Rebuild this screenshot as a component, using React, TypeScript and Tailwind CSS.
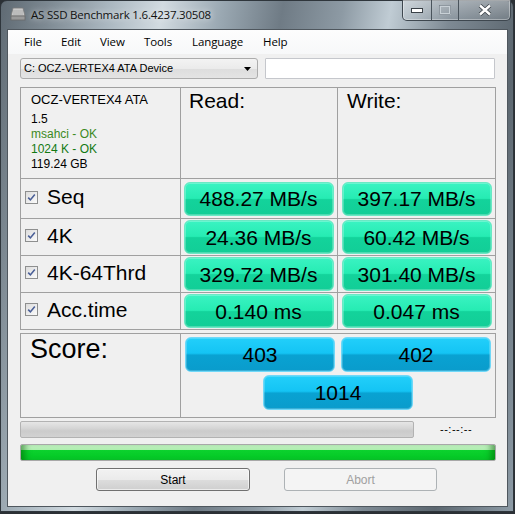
import React from 'react';

const cellBg = 'bg-[#f0f0f0]';

function Check() {
  return (
    <div className="w-[13px] h-[13px] border border-[#8e8f8f] bg-[linear-gradient(135deg,#dcdcdc,#fbfbfb)] flex items-center justify-center shrink-0">
      <svg width="9" height="9" viewBox="0 0 9 9">
        <path d="M1.2 4.6 L3.4 6.9 L7.8 1.6" fill="none" stroke="#4a5f97" strokeWidth="1.6" />
      </svg>
    </div>
  );
}

function GreenBtn({ children }: { children: React.ReactNode }) {
  return (
    <div className="w-[150px] h-[34px] rounded-[6px] border border-[#6ae8c4] bg-[linear-gradient(to_bottom,#3af3c2_0%,#26ecb3_48%,#13d39b_52%,#12ce97_100%)] shadow-[inset_0_0_0_1px_rgba(255,255,255,0.25)] flex items-center justify-center text-[21px] text-black pt-[1px]">
      {children}
    </div>
  );
}

function BlueBtn({ children }: { children: React.ReactNode }) {
  return (
    <div className="w-[150px] h-[35px] rounded-[6px] border border-[#6fd8f8] bg-[linear-gradient(to_bottom,#22cffa_0%,#14c4f4_46%,#09a2d2_52%,#0a9ccc_100%)] shadow-[inset_0_0_0_1px_rgba(255,255,255,0.2)] flex items-center justify-center text-[21px] text-black">
      {children}
    </div>
  );
}

function RowLabel({ label }: { label: string }) {
  return (
    <div className={`${cellBg} flex items-center pl-[4px] pb-[3px] gap-[9px]`}>
      <Check />
      <span className="text-[21px] leading-[24px] text-black">{label}</span>
    </div>
  );
}

const rows = [
  { label: 'Seq', read: '488.27 MB/s', write: '397.17 MB/s' },
  { label: '4K', read: '24.36 MB/s', write: '60.42 MB/s' },
  { label: '4K-64Thrd', read: '329.72 MB/s', write: '301.40 MB/s' },
  { label: 'Acc.time', read: '0.140 ms', write: '0.047 ms' },
];

// menu items with their slot widths (text + spacing)
const menu = [
  { name: 'File', w: 'w-[37px]' },
  { name: 'Edit', w: 'w-[39px]' },
  { name: 'View', w: 'w-[44px]' },
  { name: 'Tools', w: 'w-[48px]' },
  { name: 'Language', w: 'w-[71px]' },
  { name: 'Help', w: 'w-[40px]' },
];

export default function App() {
  return (
    <div className="w-[515px] h-[514px] bg-[#2b3035] overflow-hidden font-['Liberation_Sans',Arial,sans-serif]">
      <div className="w-[514px] h-[512px] rounded-t-[7px] border border-[#2f363c] bg-[linear-gradient(100deg,#5f6a73_0%,#7d8992_8%,#a9b6bf_18%,#d2dbe1_27%,#9aa8b2_37%,#6f7b85_47%,#8d9aa4_57%,#c0ccd4_65%,#7e8a94_75%,#5c6770_87%,#8d9ba6_100%)] flex flex-col">
        {/* title bar */}
        <div className="h-[28px] flex items-start">
          <svg className="ml-[9px] mt-[6px]" width="16" height="14" viewBox="0 0 16 14">
            <path d="M3 1 H13 L15 9 H1 Z" fill="#c9c9c9" stroke="#7a7a7a" strokeWidth="0.8" />
            <rect x="1" y="9" width="14" height="4" fill="#9a9a9a" stroke="#6a6a6a" strokeWidth="0.8" />
            <path d="M4 3 V8 M6 3 V8 M8 3 V8 M10 3 V8 M12 3 V8" stroke="#a8a8a8" strokeWidth="0.8" />
          </svg>
          <span className="ml-[5px] mt-[6px] text-[11.5px] leading-[16px] tracking-[-0.2px] text-[#111] font-['Open_Sans',sans-serif] [text-shadow:0_0_6px_rgba(255,255,255,0.9)]">
            AS SSD Benchmark 1.6.4237.30508
          </span>
          <div className="ml-auto mr-[2px] -mt-[1px] h-[21px] flex rounded-b-[5px] border border-[#3e474f] border-t-0 overflow-hidden shadow-[inset_0_0_0_1px_rgba(255,255,255,0.35)]">
            <div className="w-[29px] h-full flex items-center justify-center border-r border-[#4a545c] bg-[linear-gradient(to_bottom,rgba(255,255,255,0.35),rgba(255,255,255,0.1))]">
              <svg width="12" height="6" viewBox="0 0 12 6">
                <rect x="0.5" y="1.5" width="11" height="4" fill="#fff" stroke="#3a4147" />
              </svg>
            </div>
            <div className="w-[27px] h-full flex items-center justify-center border-r border-[#4a545c] bg-[linear-gradient(to_bottom,rgba(255,255,255,0.35),rgba(255,255,255,0.1))]">
              <svg width="12" height="10" viewBox="0 0 12 10">
                <rect x="1" y="1" width="10" height="8" fill="none" stroke="#c8d0d6" strokeWidth="2" />
                <rect x="0.5" y="0.5" width="11" height="9" fill="none" stroke="#6a747c" strokeWidth="0.6" />
              </svg>
            </div>
            <div className="w-[51px] h-full flex items-center justify-center bg-[linear-gradient(to_bottom,rgba(255,255,255,0.35),rgba(255,255,255,0.1))]">
              <svg width="14" height="12" viewBox="0 0 14 12">
                <path d="M2 1.5 L12 10.5 M12 1.5 L2 10.5" stroke="#3a4147" strokeWidth="4" />
                <path d="M2 1.5 L12 10.5 M12 1.5 L2 10.5" stroke="#fff" strokeWidth="2.4" />
              </svg>
            </div>
          </div>
        </div>

        {/* client area */}
        <div className="ml-[6px] w-[501px] h-[478px] border border-[#4f575e] bg-[#f0f0f0] flex flex-col">
          {/* menu */}
          <div className="h-[24px] bg-[linear-gradient(to_bottom,#fdfdfd,#f7f8f9)] flex items-center pl-[16px] text-[11.5px] tracking-[-0.1px] text-black font-['Open_Sans',sans-serif]">
            {menu.map((m) => (
              <span key={m.name} className={m.w}>{m.name}</span>
            ))}
          </div>

          <div className="px-[12px] flex flex-col">
            {/* drive selector */}
            <div className="mt-[4px] flex gap-[7px]">
              <div className="w-[239px] h-[21px] rounded-[3px] border border-[#acacac] bg-[linear-gradient(to_bottom,#f3f3f3_0%,#ebebeb_50%,#dddddd_51%,#e4e4e4_100%)] flex items-center pl-[3px] pr-[6px]">
                <span className="text-[11px] text-black flex-1">C: OCZ-VERTEX4 ATA Device</span>
                <svg width="7" height="4" viewBox="0 0 7 4">
                  <path d="M0 0 H7 L3.5 4 Z" fill="#000" />
                </svg>
              </div>
              <div className="w-[231px] h-[21px] border border-[#c5c7cc] bg-white rounded-[1px]" />
            </div>

            {/* results table */}
            <div className="mt-[8px] grid grid-cols-[159px_156px_157px] grid-rows-[90px_39px_36px_36px_36px] gap-px p-px bg-[#a0a0a0] w-[476px]">
              <div className={`${cellBg} pl-[10px] pt-[4px] flex flex-col`}>
                <span className="text-[13px] leading-[15px] text-black">OCZ-VERTEX4 ATA</span>
                <span className="mt-[5px] text-[12px] leading-[15px] text-black">1.5</span>
                <span className="text-[12px] leading-[15px] text-[#3c8a1e]">msahci - OK</span>
                <span className="text-[12px] leading-[15px] text-[#137a13]">1024 K - OK</span>
                <span className="text-[12px] leading-[15px] text-black">119.24 GB</span>
              </div>
              <div className={`${cellBg} pl-[8px] pt-[1px] text-[21px] leading-[24px] text-black`}>Read:</div>
              <div className={`${cellBg} pl-[9px] pt-[1px] text-[21px] leading-[24px] text-black`}>Write:</div>
              {rows.map((r) => (
                <React.Fragment key={r.label}>
                  <RowLabel label={r.label} />
                  <div className={`${cellBg} flex items-center justify-center pr-[1px]`}>
                    <GreenBtn>{r.read}</GreenBtn>
                  </div>
                  <div className={`${cellBg} flex items-center justify-center`}>
                    <GreenBtn>{r.write}</GreenBtn>
                  </div>
                </React.Fragment>
              ))}
            </div>

            {/* score table */}
            <div className="mt-[3px] grid grid-cols-[159px_314px] grid-rows-[83px] gap-px p-px bg-[#a0a0a0] w-[476px]">
              <div className={`${cellBg} pl-[9px] text-[27px] leading-[31px] text-black`}>Score:</div>
              <div className={`${cellBg} flex flex-col items-center pt-[3px] gap-[3px]`}>
                <div className="flex gap-[6px]">
                  <BlueBtn>403</BlueBtn>
                  <BlueBtn>402</BlueBtn>
                </div>
                <BlueBtn>1014</BlueBtn>
              </div>
            </div>

            {/* progress */}
            <div className="mt-[3px] flex items-center">
              <div className="w-[394px] h-[17px] rounded-[2px] border border-[#b2b2b2] bg-[linear-gradient(to_bottom,#e6e6e6_0%,#d6d6d6_40%,#cbcbcb_60%,#d2d2d2_100%)]" />
              <span className="ml-[26px] text-[11px] text-black tracking-[0.5px]">--:--:--</span>
            </div>
            <div className="mt-[6px] w-[476px] h-[17px] rounded-[2px] border border-[#a8a8a8] overflow-hidden bg-[linear-gradient(to_bottom,#c6f5c6_0%,#b0efb0_30%,#0cd22e_34%,#06cc28_70%,#09c92a_100%)] shadow-[inset_8px_0_6px_-4px_rgba(0,90,0,0.5),inset_-8px_0_6px_-4px_rgba(0,90,0,0.5)]" />

            {/* buttons */}
            <div className="mt-[7px] flex">
              <div className="ml-[76px] w-[154px] h-[23px] rounded-[3px] border border-[#707070] bg-[linear-gradient(to_bottom,#f2f2f2_0%,#ebebeb_50%,#dddddd_51%,#cfcfcf_100%)] shadow-[inset_0_0_0_1px_rgba(255,255,255,0.6)] flex items-center justify-center text-[12px] text-black">
                Start
              </div>
              <div className="ml-[34px] w-[153px] h-[23px] rounded-[3px] border border-[#adb2b5] bg-[#f4f4f4] flex items-center justify-center text-[12px] text-[#a0a0a0]">
                Abort
              </div>
            </div>
          </div>
        </div>
      </div>
    </div>
  );
}
